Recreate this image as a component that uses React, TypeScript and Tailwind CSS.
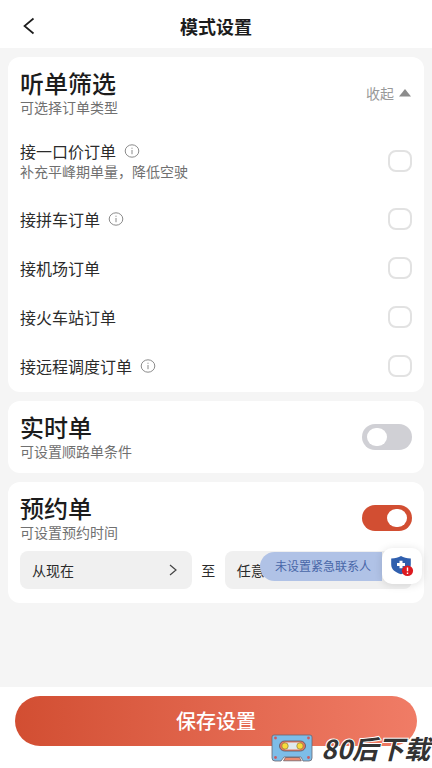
import React, { useState } from 'react';

interface OrderOption {
  id: string;
  label: string;
  info?: boolean;
  hint?: string;
}

const orderOptions: OrderOption[] = [
  { id: 'fixed', label: '接一口价订单', info: true, hint: '补充平峰期单量，降低空驶' },
  { id: 'carpool', label: '接拼车订单', info: true },
  { id: 'airport', label: '接机场订单' },
  { id: 'station', label: '接火车站订单' },
  { id: 'remote', label: '接远程调度订单', info: true },
];

const InfoIcon = () => (
  <svg width="16" height="14" viewBox="0 0 16 14" fill="none" stroke="#8a8a8a" aria-hidden="true">
    <ellipse cx="8" cy="7" rx="6.8" ry="6.2" />
    <path d="M8 6v4.2" />
    <path d="M8 3.7v1.1" />
  </svg>
);

const ShieldIcon = () => (
  <svg width="24" height="24" viewBox="0 0 24 24" aria-hidden="true">
    <path d="M11 2c2.6 1.6 5.6 2.3 9.8 2.4v6c0 4.8-3.8 7.6-9.8 9.8C5 18 1.2 15.2 1.2 10.4v-6C5.4 4.3 8.4 3.6 11 2z" fill="#2f5fae" />
    <path d="M11 6.8v7.4M7 10.5h8" stroke="#fff" strokeWidth="3" />
    <ellipse cx="17.5" cy="16.8" rx="5.6" ry="5.3" fill="#dd1a20" />
    <path d="M17.5 13.6v3.7M17.5 18.5v1.5" stroke="#fff" strokeWidth="1.4" />
  </svg>
);

const CassetteIcon = () => (
  <svg width="42" height="28" viewBox="0 0 42 28" aria-hidden="true">
    <path d="M3 1h36q2 0 2 2v21q0 3-3 3h-6l-2-4H13l-3 4H4q-3 0-3-3V3q0-2 2-2z" fill="#7dbde8" stroke="#6b6570" strokeWidth="0.8" />
    <rect x="8.5" y="7" width="26" height="10" rx="5" fill="#e8775f" stroke="#5b5560" strokeWidth="0.8" />
    <rect x="14" y="8.5" width="15" height="7" fill="#dfe9ee" />
    <circle cx="14" cy="12" r="3.2" fill="#f8dc3c" stroke="#8a7a44" strokeWidth="0.7" />
    <circle cx="29" cy="12" r="3.2" fill="#f8dc3c" stroke="#8a7a44" strokeWidth="0.7" />
    <path d="M14.5 23.5h14l1.8 3.3H12.5z" fill="#ec8b70" stroke="#5b5560" strokeWidth="0.7" />
    <g fill="#c85b62">
      <circle cx="4.5" cy="4" r="1.4" />
      <circle cx="37.5" cy="4" r="1.4" />
      <circle cx="4.5" cy="23.5" r="1.4" />
      <circle cx="37.5" cy="23.5" r="1.4" />
    </g>
  </svg>
);

interface SwitchProps {
  label: string;
  checked: boolean;
  onChange: (value: boolean) => void;
}

const Switch: React.FC<SwitchProps> = ({ label, checked, onChange }) => (
  <input
    type="checkbox"
    role="switch"
    aria-label={label}
    checked={checked}
    onChange={(e) => onChange(e.target.checked)}
    className="flex h-[26px] w-[50px] shrink-0 appearance-none items-center rounded-full bg-[#d0d0d5] px-[5px] before:h-[18px] before:w-5 before:rounded-full before:bg-white checked:justify-end checked:bg-[#d24e32]"
  />
);

const SectionTitle: React.FC<{ title: string; hint: string }> = ({ title, hint }) => (
  <div>
    <h2 className="text-2xl leading-7 font-medium text-[#1c1c1c]">{title}</h2>
    <p className="text-sm leading-5 text-[#707070]">{hint}</p>
  </div>
);

export default function App() {
  const [selected, setSelected] = useState<string[]>([]);
  const [realtime, setRealtime] = useState(false);
  const [reserved, setReserved] = useState(true);
  const [expanded, setExpanded] = useState(true);

  const toggleOption = (id: string) => {
    setSelected((prev) => (prev.includes(id) ? prev.filter((item) => item !== id) : [...prev, id]));
  };

  return (
    <div className="flex min-h-screen flex-col bg-[#f5f5f5] font-['Noto_Sans_CJK_SC',sans-serif] text-[#2b2b2b]">
      <header className="grid h-12 grid-cols-[1fr_auto_1fr] items-center bg-white px-5 pt-1">
        <button aria-label="返回" className="w-6">
          <svg width="18" height="18" viewBox="0 0 18 18" fill="none" stroke="#1c1c1c" strokeWidth="1.7" aria-hidden="true">
            <path d="M13.5 1.5L4.5 9l9 7.5" />
          </svg>
        </button>
        <h1 className="text-lg leading-6 font-bold text-[#1c1c1c]">模式设置</h1>
      </header>

      <main className="flex flex-1 flex-col gap-[9px] px-2 py-[9px]">
        {/* Order filter */}
        <section className="rounded-xl bg-white px-3 pt-3 pb-[15px]">
          <div className="flex items-center justify-between">
            <SectionTitle title="听单筛选" hint="可选择订单类型" />
            <button
              onClick={() => setExpanded(!expanded)}
              className="flex items-center gap-1 text-sm leading-5 text-[#999999]"
            >
              收起
              <svg width="14" height="8" viewBox="0 0 14 8" fill="#8c8c8c" aria-hidden="true">
                <path d="M7 0l6 7.5H1z" />
              </svg>
            </button>
          </div>
          {expanded && (
            <ul className="mt-6 flex flex-col gap-[27px]">
              {orderOptions.map((option) => (
                <li key={option.id} className="flex items-center justify-between">
                  <div>
                    <div className="flex items-center gap-2">
                      <label htmlFor={option.id} className="text-base leading-5">{option.label}</label>
                      {option.info && <InfoIcon />}
                    </div>
                    {option.hint && <p className="text-sm leading-5 text-[#707070]">{option.hint}</p>}
                  </div>
                  <input
                    id={option.id}
                    type="checkbox"
                    checked={selected.includes(option.id)}
                    onChange={() => toggleOption(option.id)}
                    className="h-[22px] w-6 appearance-none rounded-lg border-2 border-[#e2e2e2] checked:border-[#d24e32] checked:bg-[#d24e32]"
                  />
                </li>
              ))}
            </ul>
          )}
        </section>

        {/* Real-time orders */}
        <section className="flex items-center justify-between rounded-xl bg-white p-3">
          <SectionTitle title="实时单" hint="可设置顺路单条件" />
          <Switch label="实时单" checked={realtime} onChange={setRealtime} />
        </section>

        {/* Reserved orders */}
        <section className="rounded-xl bg-white px-3 pt-3 pb-[14px]">
          <div className="flex items-center justify-between">
            <SectionTitle title="预约单" hint="可设置预约时间" />
            <Switch label="预约单" checked={reserved} onChange={setReserved} />
          </div>
          <div className="relative mt-[9px] grid grid-cols-[11fr_33px_12fr] items-center text-sm leading-5">
            <button className="flex h-[38px] items-center justify-between rounded-lg bg-[#f0f0f0] px-3">
              从现在
              <svg width="14" height="14" viewBox="0 0 14 14" fill="none" stroke="#444444" strokeWidth="1.2" aria-hidden="true">
                <path d="M4 2l6 5-6 5" />
              </svg>
            </button>
            <span className="text-center">至</span>
            <button className="flex h-[38px] items-center rounded-lg bg-[#f0f0f0] px-3">任意</button>

            <button className="absolute -top-[3px] -right-[10px] flex items-center">
              <span className="h-[29px] rounded-l-full bg-[#b0c2e6] pr-[11px] pl-[15px] text-xs leading-7 text-[#4866a8]">
                未设置紧急联系人
              </span>
              <span className="flex h-9 w-10 items-center justify-center rounded-[10px] bg-white shadow-[0_1px_8px_rgba(0,0,0,0.12)]">
                <ShieldIcon />
              </span>
            </button>
          </div>
        </section>
      </main>

      <footer className="relative bg-white px-[15px] pt-[9px] pb-[22px]">
        <button className="h-[50px] w-full rounded-full bg-linear-to-r from-[#d24e32] to-[#f07c66] text-xl leading-6 font-medium text-white">
          保存设置
        </button>
        <div className="absolute right-0.5 bottom-0 flex items-center gap-2">
          <CassetteIcon />
          <span className="text-[26px] leading-10 font-bold text-[#333333] italic [paint-order:stroke] [-webkit-text-stroke:2px_#ffffff]">
            80后下载
          </span>
        </div>
      </footer>
    </div>
  );
}
